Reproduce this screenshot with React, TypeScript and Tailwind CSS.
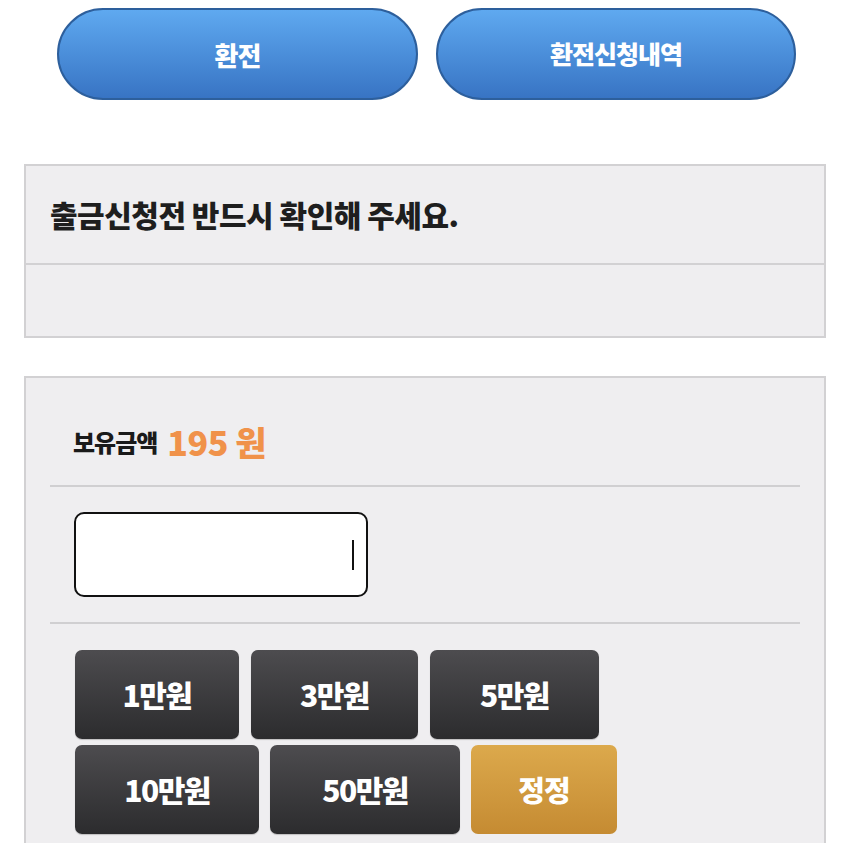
import React from "react";

const font = { fontFamily: '"Noto Sans CJK KR", "Noto Sans", sans-serif' };

function DarkBtn({ label, w }: { label: string; w: string }) {
  return (
    <button
      className={`${w} h-[89px] rounded-[7px] bg-gradient-to-b from-[#4d4c4f] to-[#2c2c2e] text-white text-[30px] font-black tracking-[-1.5px] shadow-[0_1px_1px_rgba(0,0,0,0.2)]`}
    >
      {label}
    </button>
  );
}

export default function App() {
  return (
    <div className="w-[850px] h-[843px] overflow-hidden bg-white" style={font}>
      <div className="flex gap-[18px] pl-[57px] pt-[8px]">
        <button className="w-[361px] h-[92px] rounded-full border-2 border-[#2d5f9c] bg-gradient-to-b from-[#5fa9f0] to-[#3874c4] text-white text-[26px] font-black tracking-[-1px]">
          환전
        </button>
        <button className="w-[360px] h-[92px] rounded-full border-2 border-[#2d5f9c] bg-gradient-to-b from-[#5fa9f0] to-[#3874c4] text-white text-[25px] font-black tracking-[-1px]">
          환전신청내역
        </button>
      </div>

      <div className="mx-[24px] mt-[64px] border-2 border-[#d2d1d3] bg-[#efeef0]">
        <div className="h-[99px] flex items-center pl-[24px] border-b-2 border-[#d2d1d3]">
          <span className="text-[30px] font-black text-[#1e1e1e] tracking-[-0.5px]">
            출금신청전 반드시 확인해 주세요.
          </span>
        </div>
        <div className="h-[71px]" />
      </div>

      <div className="mx-[24px] mt-[38px] border-2 border-[#d2d1d3] bg-[#efeef0] px-[24px] h-[500px]">
        <div className="h-[109px] flex items-center pl-[23px] pt-[20px] border-b-2 border-[#d0cfd1]">
          <span className="text-[24px] font-black text-[#1a1a1a] tracking-[-1px]">보유금액</span>
          <span className="ml-[10px] text-[34px] font-black text-[#f0924a] tracking-[-0.5px]">195 원</span>
        </div>
        <div className="py-[25px] pl-[24px] border-b-2 border-[#d0cfd1]">
          <div className="w-[294px] h-[85px] rounded-[10px] border-2 border-[#111] bg-white flex items-center justify-end pr-[12px]">
            <div className="w-[2px] h-[30px] bg-[#111]" />
          </div>
        </div>
        <div className="pt-[26px] pl-[25px] flex flex-col gap-[6px]">
          <div className="flex gap-[12px]">
            <DarkBtn label="1만원" w="w-[164px]" />
            <DarkBtn label="3만원" w="w-[167px]" />
            <DarkBtn label="5만원" w="w-[169px]" />
          </div>
          <div className="flex gap-[11px]">
            <DarkBtn label="10만원" w="w-[184px]" />
            <DarkBtn label="50만원" w="w-[190px]" />
            <button className="w-[146px] h-[89px] rounded-[7px] bg-gradient-to-b from-[#dca94c] to-[#c58b32] text-white text-[29px] font-black tracking-[-1px]">
              정정
            </button>
          </div>
        </div>
      </div>
    </div>
  );
}
